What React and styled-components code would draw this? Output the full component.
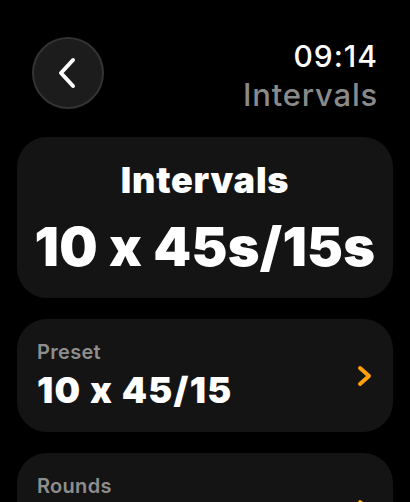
import React from 'react';
import styled, { createGlobalStyle } from 'styled-components';

const Global = createGlobalStyle`
  html, body { margin:0; padding:0; background:#000; }
  body { font-family: Inter, "Noto Sans", sans-serif; color:#fff; overflow:hidden; font-feature-settings:"calt" 0; }
`

const Screen = styled.div`
  width:410px; height:502px; overflow:hidden;
  padding:0 17px; box-sizing:border-box;
  display:flex; flex-direction:column;
`

const Header = styled.div`
  display:flex; justify-content:space-between; align-items:flex-start;
  padding:37px 16px 0 15px;
  height:100px; box-sizing:border-box;
`

const BackButton = styled.button`
  width:72px; height:72px; border-radius:50%;
  background:#1c1c1c; border:2px solid #333;
  box-sizing:border-box; padding:0;
  display:flex; align-items:center; justify-content:center;
  svg { margin-left:-3px; }
`

const TitleBlock = styled.div`
  display:flex; flex-direction:column; align-items:flex-end;
  margin-top:2px;
`

const Time = styled.div`
  font-size:30px; font-weight:500; line-height:34px; letter-spacing:1px; margin-right:-1px;
`

const ScreenTitle = styled.div`
  font-size:31px; font-weight:500; line-height:36px; color:#8a8a8a; margin-top:4px;
  letter-spacing:0.8px; margin-right:-1px;
`

const Card = styled.div`
  background:#141414; border-radius:30px;
  margin-top:${p => p.$gap}px;
  height:${p => p.$h}px; flex-shrink:0;
  box-sizing:border-box;
`

const Summary = styled(Card)`
  display:flex; flex-direction:column; align-items:center;
  padding-top:21px;
`

const SummaryTitle = styled.div`
  font-size:36px; font-weight:900; line-height:44px; letter-spacing:0.8px;
`

const SummaryValue = styled.div`
  font-size:54px; font-weight:900; line-height:64px; margin-top:13px; letter-spacing:0.3px;
`

const Row = styled(Card)`
  display:flex; align-items:center; justify-content:space-between;
  padding:0 20px 0 20px;
`

const RowText = styled.div`
  display:flex; flex-direction:column;
`

const RowLabel = styled.div`
  font-size:20px; font-weight:600; line-height:24px; color:#8e8e8e; letter-spacing:0.3px;
`

const RowValue = styled.div`
  font-size:36px; font-weight:900; line-height:42px; margin-top:5px; letter-spacing:1.3px;
`

const Chevron = () => (
  <svg width="16" height="22" viewBox="0 0 16 22">
    <path d="M3 3 L12 11 L3 19" fill="none" stroke="#ff9f0a" strokeWidth="4" strokeLinecap="round" strokeLinejoin="round"/>
  </svg>
)

const rows = [
  { label:'Preset', value:'10 x 45/15' },
  { label:'Rounds', value:'10' },
]

const App = () => (
  <>
    <Global />
    <Screen>
      <Header>
        <BackButton>
          <svg width="24" height="34" viewBox="0 0 24 34">
            <path d="M18 4 L6 17 L18 30" fill="none" stroke="#fff" strokeWidth="4" strokeLinecap="round" strokeLinejoin="round"/>
          </svg>
        </BackButton>
        <TitleBlock>
          <Time>09:14</Time>
          <ScreenTitle>Intervals</ScreenTitle>
        </TitleBlock>
      </Header>
      <Summary $gap={37} $h={161}>
        <SummaryTitle>Intervals</SummaryTitle>
        <SummaryValue>10 x 45s/15s</SummaryValue>
      </Summary>
      {rows.map(r => (
        <Row key={r.label} $gap={21} $h={113}>
          <RowText>
            <RowLabel>{r.label}</RowLabel>
            <RowValue>{r.value}</RowValue>
          </RowText>
          <Chevron />
        </Row>
      ))}
    </Screen>
  </>
)

export default App
